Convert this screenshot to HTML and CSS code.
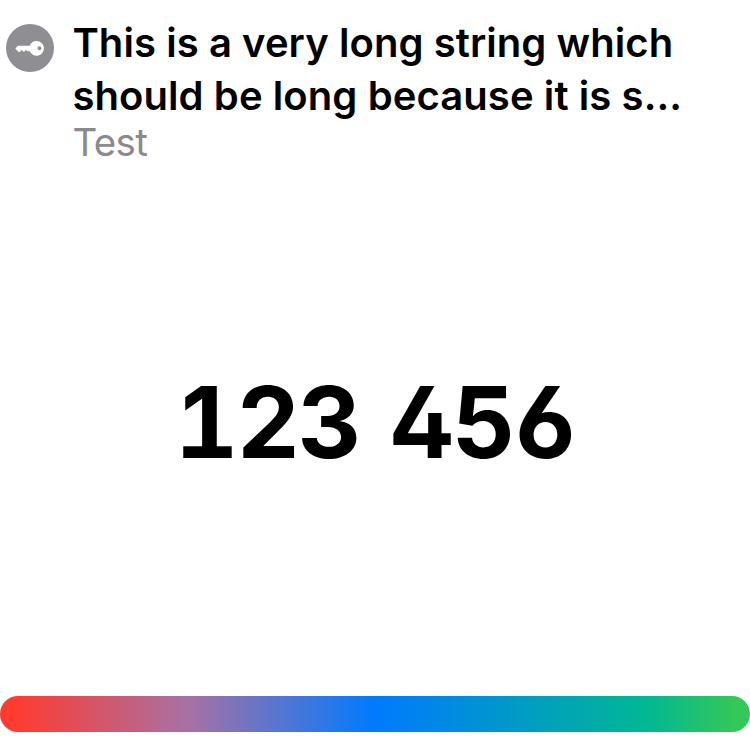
FILE: index.html
```html
<!DOCTYPE html>
<html lang="en">
<head>
<meta charset="utf-8">
<title>One-time code</title>
<link rel="stylesheet" href="styles.css">
</head>
<body>
<main class="card">
  <header class="header">
    <svg class="icon" viewBox="0 0 48 48" aria-hidden="true">
      <circle cx="24" cy="24" r="24" fill="#8e8e93"/>
      <path fill="#fff" fill-rule="evenodd" d="M30.6 16.9a7.4 7.4 0 1 1-6.9 10.3H21.6l-1.7-1.2-2 1.9-2-1.9-2.1 2h-1.3L9.3 24.5l2.6-2.7h11.8a7.4 7.4 0 0 1 6.9-4.9zm2.8 5.4a2 2 0 1 0 0 4 2 2 0 0 0 0-4z"/>
    </svg>
    <div class="labels">
      <h1 class="title"><span class="line line-one">This is a very long string which</span> <span class="line line-two">should be long because it is s...</span></h1>
      <p class="subtitle">Test</p>
    </div>
  </header>
  <div class="code"><span>123</span><span>456</span></div>
  <div class="bar"></div>
</main>
</body>
</html>
```
FILE: styles.css
```css
* { box-sizing: border-box; }
body { margin: 0; background: #fff; font-family: Inter, sans-serif; }
.card { height: 750px; display: flex; flex-direction: column; padding: 16px 0 18px; overflow: hidden; }
.header { display: flex; gap: 18.4px; padding-left: 6px; height: 151px; }
.icon { width: 48px; height: 48px; margin-top: 8px; flex: none; }
.title { margin: 0; font-size: 40px; line-height: 53px; font-weight: 580; white-space: nowrap; }
.line { display: block; }
.line-one { letter-spacing: 0.07px; }
.line-two { letter-spacing: 0.09px; }
.subtitle { margin: -3px 0 0; font-size: 38.5px; line-height: 46px; letter-spacing: -0.6px; color: #8a8a8e; }
.code { flex: 1; display: flex; justify-content: center; align-items: center; gap: 30.5px; padding: 0 0 19px; font-size: 98.5px; font-weight: 700; letter-spacing: -2px; font-feature-settings: "tnum", "cv02", "cv03", "cv04"; }
.bar { height: 36px; border-radius: 18px; background: linear-gradient(90deg, #ff3b30 2%, #a871a4 25%, #007aff 50%, #00b894 86%, #34c759 98%); }
```
